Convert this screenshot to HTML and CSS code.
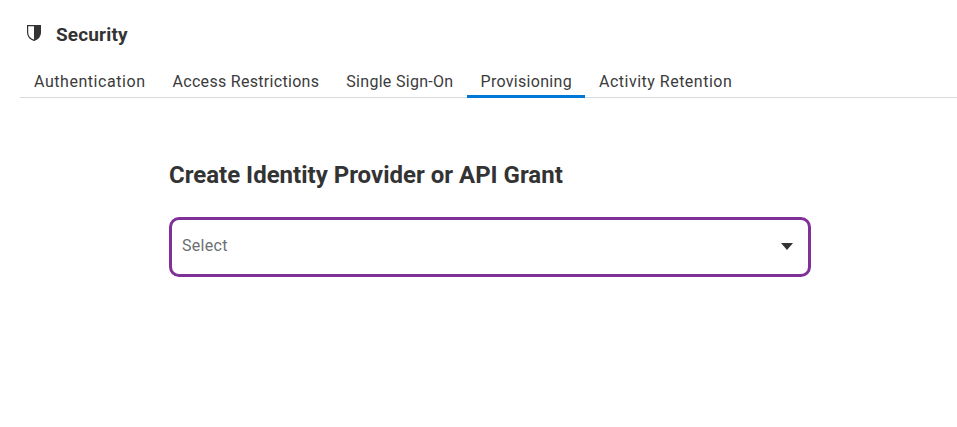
FILE: index.html
```html
<!DOCTYPE html>
<html lang="en">
<head>
<meta charset="UTF-8">
<meta name="viewport" content="width=device-width, initial-scale=1.0">
<title>Security</title>
<link rel="stylesheet" href="styles.css">
</head>
<body>
<header class="page-head">
  <svg class="shield" width="14" height="16" viewBox="0 0 14 16">
    <path d="M0.6 0.6H13.4V7.5C13.4 11.2 10.6 14 7 15.4C3.4 14 0.6 11.2 0.6 7.5Z" fill="#fff" stroke="#333" stroke-width="1.2"/>
    <path d="M7 0.6H13.4V7.5C13.4 11.2 10.6 14 7 15.4Z" fill="#333"/>
  </svg>
  <h1>Security</h1>
</header>

<nav class="tabs">
  <a class="tab">Authentication</a>
  <a class="tab">Access Restrictions</a>
  <a class="tab">Single Sign-On</a>
  <a class="tab active">Provisioning</a>
  <a class="tab">Activity Retention</a>
</nav>

<main class="content">
  <h2>Create Identity Provider or API Grant</h2>
  <div class="select">
    <span>Select</span>
    <span class="caret"></span>
  </div>
</main>
</body>
</html>
```

FILE: styles.css
```css
body { margin: 0; background: #fff; color: #3b3b3b; font-family: Roboto, "Liberation Sans", sans-serif; }
.page-head { display: flex; align-items: center; gap: 15px; padding: 24px 0 0 27px; height: 22px; }
.page-head h1 { margin: 0; font-size: 19px; letter-spacing: 0.15px; font-weight: 700; line-height: 22px; color: #333; }
.shield { display: block; margin-top: -4px; }
.tabs { display: flex; gap: 0; margin: 13px 0 0 20px; height: 38px; box-sizing: content-box; border-bottom: 1px solid #d9d9d9; }
.tab { padding: 0 13.5px; font-size: 16px; letter-spacing: 0.3px; line-height: 46px; height: 38px; white-space: nowrap; }
.tab:first-child { letter-spacing: 0.55px; padding-left: 14px; }
.tab:last-child { letter-spacing: 0.5px; }
.tab.active { height: 36px; border-bottom: 3px solid #0078d7; }
.content { width: 642px; margin: 0 0 0 169px; padding-top: 62px; }
.content h2 { margin: 0; font-size: 24px; font-weight: 700; line-height: 30px; color: #333; }
.select { display: flex; align-items: center; justify-content: space-between; box-sizing: border-box; height: 60px; margin-top: 27px; padding: 0 15px 0 10px; border: 3px solid #7f3197; border-radius: 10px; font-size: 16px; letter-spacing: 0.3px; color: #6b6f73; }
.select span:first-child { margin-top: -3px; }
.caret { width: 0; height: 0; margin-top: -1px; border-left: 6.5px solid transparent; border-right: 6.5px solid transparent; border-top: 7px solid #333; }
```
